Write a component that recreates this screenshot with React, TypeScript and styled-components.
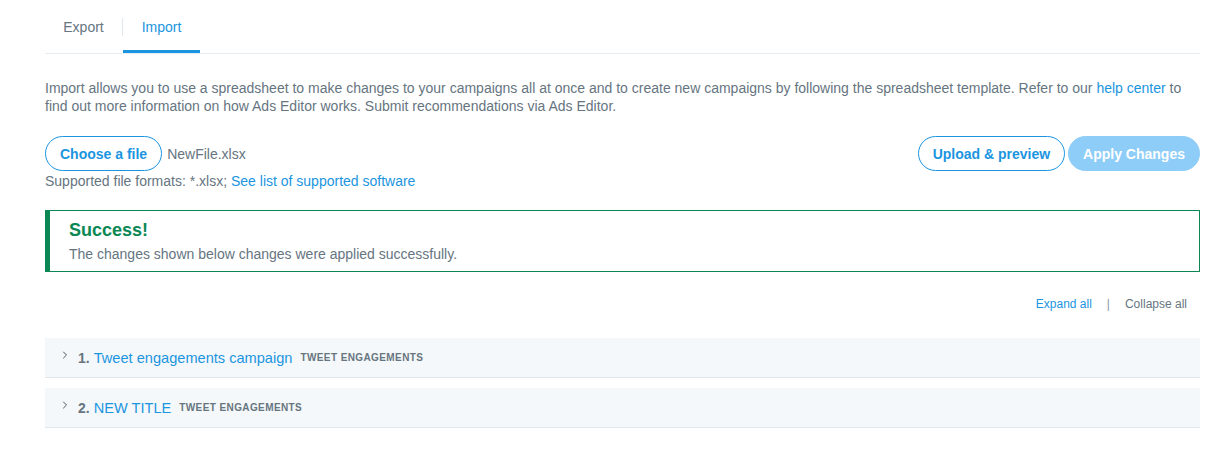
import styled, { createGlobalStyle } from 'styled-components';
import { ChevronRight } from 'lucide-react';

const GlobalStyle = createGlobalStyle`
  body {
    margin: 0;
    background: #fff;
    font-family: "Liberation Sans", Arial, sans-serif;
    color: #66757f;
  }
  * { box-sizing: border-box; }
`;

const Page = styled.div`
  padding: 0 30px 0 45px;
  width: 1230px;
`;

const TabBar = styled.div`
  display: flex;
  height: 54px;
  border-bottom: 1px solid #e6ecf0;
`;

const Tab = styled.div<{ $active?: boolean }>`
  width: 77px;
  display: flex;
  align-items: center;
  justify-content: center;
  height: 53px;
  padding-top: 4px;
  font-size: 14px;
  color: ${(p) => (p.$active ? '#1b95e0' : '#66757f')};
  border-bottom: 3px solid ${(p) => (p.$active ? '#1b95e0' : 'transparent')};
`;

const TabDivider = styled.div`
  width: 1px;
  height: 18px;
  margin-top: 18px;
  background: #e1e8ed;
`;

const Intro = styled.p`
  margin: 25px 0 0;
  font-size: 14px;
  line-height: 18px;
  color: #66757f;
`;

const Link = styled.a`
  color: #1b95e0;
  text-decoration: none;
`;

const ActionRow = styled.div`
  display: flex;
  justify-content: space-between;
  align-items: flex-start;
  margin-top: 21px;
`;

const FilePicker = styled.div`
  display: flex;
  flex-direction: column;
`;

const FileLine = styled.div`
  display: flex;
  align-items: center;
  gap: 5px;
  font-size: 14px;
`;

const Button = styled.button<{ $primary?: boolean }>`
  height: 35px;
  padding: 0 14px;
  border-radius: 18px;
  font-family: "Liberation Sans", Arial, sans-serif;
  font-size: 14px;
  font-weight: 700;
  cursor: pointer;
  border: 1px solid ${(p) => (p.$primary ? '#8ecdf8' : '#1b95e0')};
  background: ${(p) => (p.$primary ? '#8ecdf8' : '#fff')};
  color: ${(p) => (p.$primary ? '#fff' : '#1b95e0')};
`;

const ButtonGroup = styled.div`
  display: flex;
  gap: 3px;
`;

const Hint = styled.div`
  font-size: 14px;
  line-height: 18px;
  margin-top: 1px;
`;

const Alert = styled.div`
  margin-top: 20px;
  border: 1px solid #0a8754;
  border-left: 5px solid #0a8754;
  padding: 8px 19px 8px;
`;

const AlertTitle = styled.div`
  font-size: 18px;
  line-height: 22px;
  font-weight: 700;
  color: #0a8754;
`;

const AlertText = styled.div`
  margin-top: 4px;
  font-size: 14px;
  line-height: 18px;
`;

const Toggles = styled.div`
  display: flex;
  justify-content: flex-end;
  align-items: center;
  gap: 15px;
  margin-top: 24px;
  padding-right: 13px;
  font-size: 12px;
  line-height: 16px;
`;

const Sep = styled.span`
  color: #8899a6;
`;

const CampaignList = styled.div`
  display: flex;
  flex-direction: column;
  gap: 10px;
  margin-top: 26px;
`;

const CampaignRow = styled.div`
  display: flex;
  align-items: center;
  height: 40px;
  padding-left: 14px;
  background: #f5f8fa;
  border-bottom: 1px solid #e1e8ed;
`;

const Chevron = styled.span`
  display: flex;
  color: #4a5862;
  margin-right: 7px;
  margin-top: -5px;
`;

const Index = styled.span`
  font-size: 14px;
  font-weight: 700;
  color: #66757f;
  margin-right: 4px;
`;

const CampaignName = styled.span`
  font-size: 14.6px;
  color: #1b95e0;
  margin-right: 8px;
`;

const Objective = styled.span`
  font-size: 10px;
  font-weight: 700;
  letter-spacing: 0.4px;
  color: #66757f;
  text-transform: uppercase;
`;

const campaigns = [
  { name: 'Tweet engagements campaign', objective: 'Tweet engagements' },
  { name: 'NEW TITLE', objective: 'Tweet engagements' },
];

export default function App() {
  return (
    <>
      <GlobalStyle />
      <Page>
        <TabBar>
          <Tab>Export</Tab>
          <TabDivider />
          <Tab $active>Import</Tab>
        </TabBar>

        <Intro>
          Import allows you to use a spreadsheet to make changes to your campaigns all at once and to create new
          campaigns by following the spreadsheet template. Refer to our <Link href="#">help center</Link> to
          <br />
          find out more information on how Ads Editor works. Submit recommendations via Ads Editor.
        </Intro>

        <ActionRow>
          <FilePicker>
            <FileLine>
              <Button>Choose a file</Button>
              <span>NewFile.xlsx</span>
            </FileLine>
            <Hint>
              Supported file formats: *.xlsx; <Link href="#">See list of supported software</Link>
            </Hint>
          </FilePicker>
          <ButtonGroup>
            <Button>Upload &amp; preview</Button>
            <Button $primary>Apply Changes</Button>
          </ButtonGroup>
        </ActionRow>

        <Alert>
          <AlertTitle>Success!</AlertTitle>
          <AlertText>The changes shown below changes were applied successfully.</AlertText>
        </Alert>

        <Toggles>
          <Link href="#">Expand all</Link>
          <Sep>|</Sep>
          <span>Collapse all</span>
        </Toggles>

        <CampaignList>
          {campaigns.map((c, i) => (
            <CampaignRow key={c.name}>
              <Chevron>
                <ChevronRight size={12} strokeWidth={2} />
              </Chevron>
              <Index>{i + 1}.</Index>
              <CampaignName>{c.name}</CampaignName>
              <Objective>{c.objective}</Objective>
            </CampaignRow>
          ))}
        </CampaignList>
      </Page>
    </>
  );
}
